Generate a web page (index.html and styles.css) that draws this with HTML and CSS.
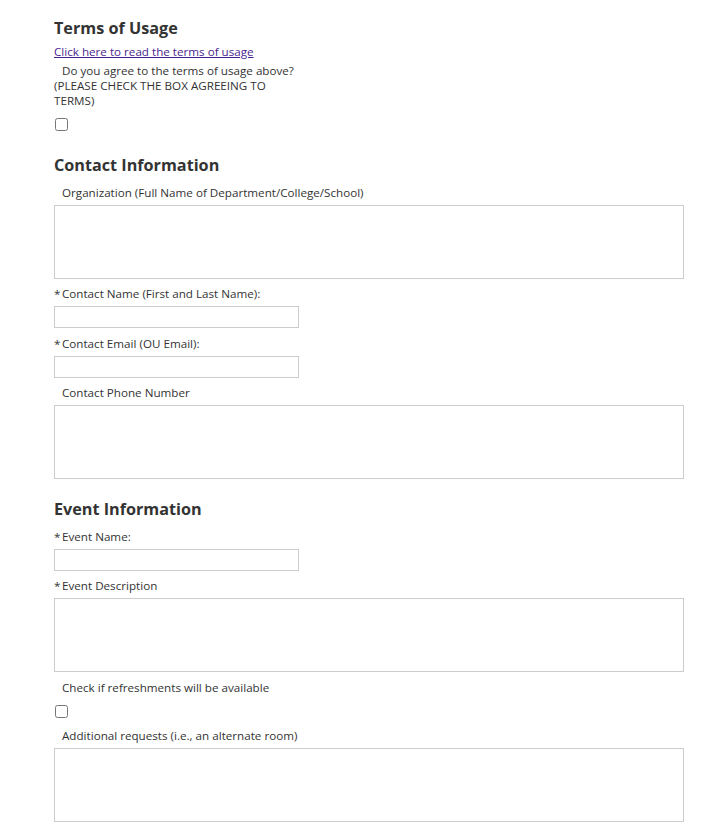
FILE: index.html
```html
<!DOCTYPE html>
<html lang="en">

<head>
  <meta charset="UTF-8">
  <meta name="viewport" content="width=device-width, initial-scale=1.0">
  <title>Room Request</title>
  <link rel="stylesheet" href="styles.css">
</head>

<body>
  <form class="request-form">
    <div class="section terms-section">
      <h2>Terms of Usage</h2>
      <a href="#" class="terms-link">Click here to read the terms of usage</a>
      <label class="field-label terms-label"><span class="mark"></span>Do you agree to the terms of usage above? (PLEASE CHECK THE BOX AGREEING TO TERMS)</label>
      <input type="checkbox" class="check" id="agree">
    </div>

    <div class="section">
      <h2>Contact Information</h2>
      <div class="field">
        <label class="field-label"><span class="mark"></span>Organization (Full Name of Department/College/School)</label>
        <textarea class="input-area"></textarea>
      </div>
      <div class="field">
        <label class="field-label"><span class="mark">*</span>Contact Name (First and Last Name):</label>
        <input type="text" class="input-text">
      </div>
      <div class="field">
        <label class="field-label"><span class="mark">*</span>Contact Email (OU Email):</label>
        <input type="text" class="input-text">
      </div>
      <div class="field">
        <label class="field-label"><span class="mark"></span>Contact Phone Number</label>
        <textarea class="input-area"></textarea>
      </div>
    </div>

    <div class="section">
      <h2>Event Information</h2>
      <div class="field">
        <label class="field-label"><span class="mark">*</span>Event Name:</label>
        <input type="text" class="input-text">
      </div>
      <div class="field">
        <label class="field-label"><span class="mark">*</span>Event Description</label>
        <textarea class="input-area"></textarea>
      </div>
      <div class="field">
        <label class="field-label check-label"><span class="mark"></span>Check if refreshments will be available</label>
        <input type="checkbox" class="check">
      </div>
      <div class="field">
        <label class="field-label"><span class="mark"></span>Additional requests (i.e., an alternate room)</label>
        <textarea class="input-area"></textarea>
      </div>
    </div>
  </form>
</body>

</html>
```

FILE: styles.css
```css
body {
  font-family: "Open Sans", Arial, sans-serif;
  font-size: 11.65px;
  color: #333;
  margin: 0;
  padding: 0;
}

.request-form {
  padding: 16px 0 0 54px;
  width: 630px;
}

.section {
  margin-bottom: 18px;
}

.terms-section {
  margin-bottom: 22px;
}

h2 {
  font-size: 16.2px;
  line-height: 24px;
  margin: 0;
  color: #333;
}

.terms-link {
  display: block;
  margin-top: 3.5px;
  line-height: 16px;
  color: #4a1f8f;
}

.field {
  margin-top: 7.5px;
}

.field-label {
  display: block;
  line-height: 15px;
  margin-bottom: 5px;
}

.terms-label {
  width: 245px;
  margin-top: 3px;
  margin-bottom: 10.5px;
}

.check-label {
  margin-bottom: 10px;
}

.mark {
  display: inline-block;
  width: 8px;
}

.input-text {
  display: block;
  box-sizing: border-box;
  width: 245px;
  height: 22px;
  border: 1px solid #ccc;
  margin: 0;
  padding: 2px 4px;
}

.input-area {
  display: block;
  box-sizing: border-box;
  width: 630px;
  height: 74px;
  border: 1px solid #ccc;
  margin: 0;
  resize: none;
}

.check {
  display: block;
  margin: 0 0 10.5px 1px;
  width: 13px;
  height: 13px;
}
```
